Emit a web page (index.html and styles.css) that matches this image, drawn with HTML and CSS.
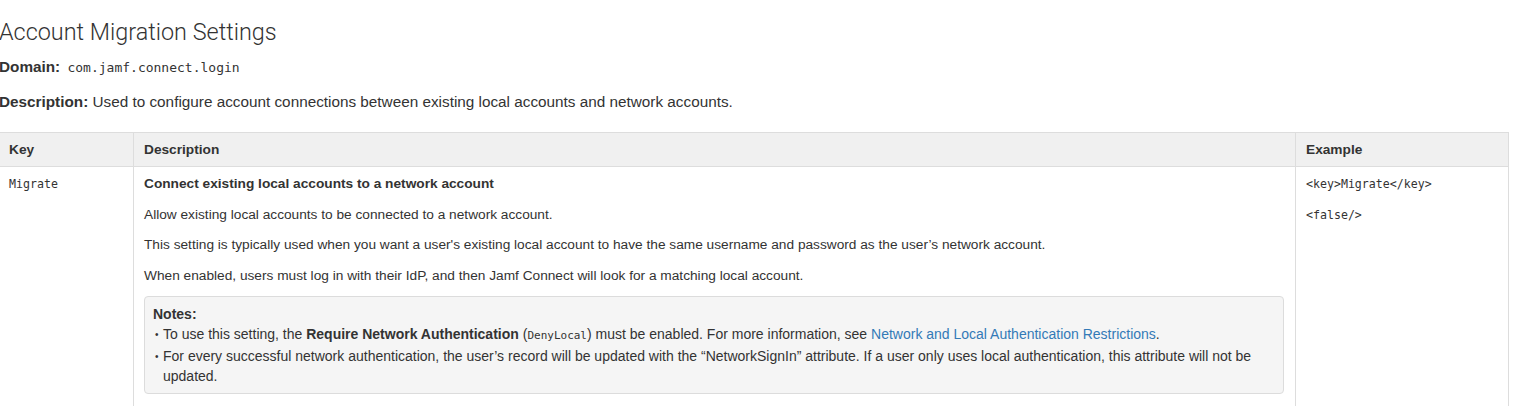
FILE: index.html
```html
<!DOCTYPE html>
<html>
<head>
<meta charset="utf-8">
<link rel="stylesheet" href="styles.css">
</head>
<body>
<div class="page">
  <h1 class="title">Account Migration Settings</h1>
  <p class="meta"><b>Domain:</b> <code class="domain">com.jamf.connect.login</code></p>
  <p class="meta"><b>Description:</b> Used to configure account connections between existing local accounts and network accounts.</p>
  <table class="settings">
    <colgroup>
      <col class="col-key">
      <col class="col-desc">
      <col class="col-ex">
    </colgroup>
    <thead>
      <tr>
        <th>Key</th>
        <th>Description</th>
        <th>Example</th>
      </tr>
    </thead>
    <tbody>
      <tr>
        <td class="cell-key"><code>Migrate</code></td>
        <td class="cell-desc">
          <p><b>Connect existing local accounts to a network account</b></p>
          <p>Allow existing local accounts to be connected to a network account.</p>
          <p>This setting is typically used when you want a user's existing local account to have the same username and password as the user’s network account.</p>
          <p>When enabled, users must log in with their IdP, and then Jamf Connect will look for a matching local account.</p>
          <div class="note">
            <div class="note-title">Notes:</div>
            <ul>
              <li>To use this setting, the <b>Require Network Authentication</b> (<code>DenyLocal</code>) must be enabled. For more information, see <a href="#">Network and Local Authentication Restrictions</a>.</li>
              <li>For every successful network authentication, the user’s record will be updated with the “NetworkSignIn” attribute. If a user only uses local authentication, this attribute will not be updated.</li>
            </ul>
          </div>
        </td>
        <td class="cell-ex">
          <p><code>&lt;key&gt;Migrate&lt;/key&gt;</code></p>
          <p><code>&lt;false/&gt;</code></p>
        </td>
      </tr>
    </tbody>
  </table>
</div>
</body>
</html>
```

FILE: styles.css
```css
html, body {
  margin: 0;
  padding: 0;
  background: #ffffff;
}
body {
  font-family: "Liberation Sans", Arial, sans-serif;
  color: #333333;
  font-size: 15.3px;
}
.page {
  width: 1509px;
  margin-left: -1px;
}
.title {
  font-family: Roboto, "Liberation Sans", sans-serif;
  font-weight: 300;
  font-size: 23.4px;
  color: #333;
  margin: 18px 0 0 0;
  line-height: 28px;
}
.meta {
  margin: 9px 0 0 0;
  line-height: 24px;
  font-size: 15.3px;
}
.meta + .meta {
  margin-top: 10px;
}
code {
  font-family: "DejaVu Sans Mono", "Liberation Mono", monospace;
  font-size: 11.6px;
  color: #333;
}
.domain {
  font-size: 13px;
  margin-left: 3px;
}
.settings {
  margin-top: 18px;
  border-collapse: collapse;
  width: 1509px;
  table-layout: fixed;
  font-size: 13.7px;
}
.col-key { width: 134px; }
.col-desc { width: 1162px; }
.col-ex { width: 213px; }
.settings th {
  background: #f0f0f0;
  text-align: left;
  font-weight: bold;
  padding: 0 10px;
  height: 33px;
  border: 1px solid #dddddd;
  color: #333;
}
.settings th:first-child { padding-left: 9px; }
.settings td {
  border: 1px solid #dddddd;
  border-bottom: none;
  vertical-align: top;
  padding: 7px 11px 0 10px;
}
.settings td.cell-key { padding-left: 9px; padding-top: 9px; }
.settings td.cell-ex { padding-top: 7px; }
.settings td p {
  margin: 0 0 10.6px 0;
  line-height: 20px;
}
.settings td.cell-ex p { margin-bottom: 11px; line-height: 20px; }
.note {
  background: #f5f5f5;
  border: 1px solid #dcdcdc;
  border-radius: 4px;
  padding: 7px 8px 7px 8px;
  margin-bottom: 13px;
  font-size: 14px;
}
.note-title {
  font-weight: bold;
  line-height: 20px;
}
.note ul {
  margin: 0;
  padding-left: 10px;
  list-style: none;
}
.note li {
  line-height: 20px;
}
.note li::before {
  content: "\2022";
  display: inline-block;
  width: 8px;
  margin-left: -8px;
  font-size: 10px;
  line-height: 1;
  vertical-align: 1px;
}
.note code { font-size: 11px; }
a { color: #337ab7; text-decoration: none; }
```
